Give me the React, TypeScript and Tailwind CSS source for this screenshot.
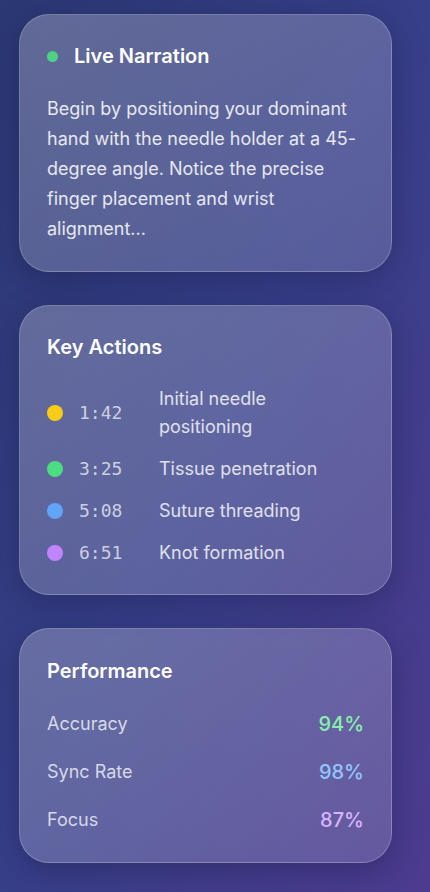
const actions = [
  { time: '1:42', label: 'Initial needle positioning', dot: 'bg-[#facc15]' },
  { time: '3:25', label: 'Tissue penetration', dot: 'bg-[#4ade80]' },
  { time: '5:08', label: 'Suture threading', dot: 'bg-[#60a5fa]' },
  { time: '6:51', label: 'Knot formation', dot: 'bg-[#c084fc]' },
];

const stats = [
  { label: 'Accuracy', value: '94%', cls: 'text-[#86efac]' },
  { label: 'Sync Rate', value: '98%', cls: 'text-[#93c5fd]' },
  { label: 'Focus', value: '87%', cls: 'text-[#d8b4fe]' },
];

const card =
  'rounded-[30px] border border-white/20 bg-gradient-to-br from-white/25 to-white/15 px-[27px] shadow-[0_8px_30px_rgba(20,20,60,0.35)]';

export default function App() {
  return (
    <div
      className="min-h-[892px] w-[430px] bg-gradient-to-br from-[#2b3873] via-[#373f89] to-[#4d3b90] pl-[19px] pr-[38px] pt-[14px] pb-[30px]"
      style={{ fontFamily: 'Inter, "Noto Sans", sans-serif' }}
    >
      <div className="flex flex-col gap-[33px]">
        <div className={`${card} py-[27px]`}>
          <div className="mb-6 flex items-center gap-[16px]">
            <span className="h-[11px] w-[11px] rounded-full bg-[#4ade80]/90" />
            <h2 className="text-xl font-semibold leading-7 text-white">Live Narration</h2>
          </div>
          <p className="text-[18px] leading-[30px] text-white/85">
            Begin by positioning your dominant hand with the needle holder at a 45-degree angle. Notice the precise finger placement and wrist alignment...
          </p>
        </div>

        <div className={`${card} py-[27px]`}>
          <h2 className="mb-6 text-xl font-semibold leading-7 text-white">Key Actions</h2>
          <div className="flex flex-col gap-[14px]">
            {actions.map(a => (
              <div key={a.time} className="flex items-center gap-4">
                <span className={`h-4 w-4 shrink-0 rounded-full ${a.dot}`} />
                <span
                  className="w-16 shrink-0 text-[18px] leading-7 text-white/70"
                  style={{ fontFamily: '"DejaVu Sans Mono", monospace' }}
                >
                  {a.time}
                </span>
                <span className="max-w-[196px] text-[18px] leading-7 text-white/80">{a.label}</span>
              </div>
            ))}
          </div>
        </div>

        <div className={`${card} pt-[28px] pb-[28px]`}>
          <h2 className="mb-[25px] text-xl font-semibold leading-7 text-white">Performance</h2>
          <div className="flex flex-col gap-[20px]">
            {stats.map(s => (
              <div key={s.label} className="flex items-center justify-between">
                <span className="text-[18px] leading-7 text-white/75">{s.label}</span>
                <span className={`text-[20px] font-medium leading-7 ${s.cls}`}>{s.value}</span>
              </div>
            ))}
          </div>
        </div>
      </div>
    </div>
  );
}
